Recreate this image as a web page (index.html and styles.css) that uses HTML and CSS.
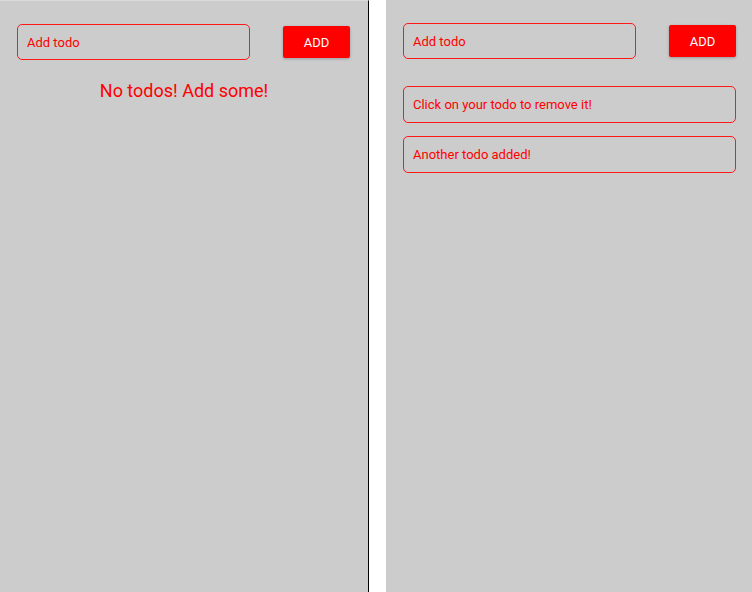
FILE: index.html
```html
<!DOCTYPE html>
<html>
<head>
<meta charset="utf-8">
<link rel="stylesheet" href="styles.css">
</head>
<body>
<div class="screens">
  <section class="panel panel-left">
    <form class="todo-form">
      <div class="todo-input">Add todo</div>
      <button class="add-btn" type="button">ADD</button>
    </form>
    <p class="empty">No todos! Add some!</p>
  </section>
  <div class="divider"></div>
  <section class="panel panel-right">
    <form class="todo-form">
      <div class="todo-input">Add todo</div>
      <button class="add-btn" type="button">ADD</button>
    </form>
    <ul class="todo-list">
      <li class="todo-item">Click on your todo to remove it!</li>
      <li class="todo-item">Another todo added!</li>
    </ul>
  </section>
</div>
</body>
</html>
```
FILE: styles.css
```css
html, body {
  margin: 0;
  padding: 0;
  background: #ffffff;
  height: 592px;
  overflow: hidden;
}
body {
  font-family: Roboto, "Liberation Sans", sans-serif;
  color: #ff0000;
}
.screens {
  display: flex;
  height: 592px;
}
.panel {
  background: #cccccc;
  box-sizing: border-box;
  padding: 23px 17px 0 17px;
}
.panel-left {
  width: 369px;
  border-top: 1px solid #dcdcdc;
  border-right: 1px solid #000000;
}
.panel-left .add-btn {
  margin-right: 1px;
}
.divider {
  width: 17px;
  background: #ffffff;
}
.panel-right {
  flex: 1;
  padding-right: 16px;
}
.todo-form {
  display: flex;
  justify-content: space-between;
  align-items: center;
  margin: 0;
}
.todo-input {
  width: 233px;
  height: 36px;
  box-sizing: border-box;
  border: 1px solid #ff1a1a;
  border-radius: 5px;
  padding: 1px 9px 0 9px;
  font-size: 13px;
  line-height: 34px;
  color: #ff0000;
}
.add-btn {
  width: 67px;
  height: 32px;
  border: none;
  border-radius: 2px;
  background: #ff0000;
  color: #ffffff;
  font-family: Roboto, "Liberation Sans", sans-serif;
  font-size: 13px;
  padding: 0;
  box-shadow: 0 1px 3px rgba(0, 0, 0, 0.25);
}
.empty {
  margin: 20px 0 0 0;
  text-align: center;
  font-size: 18px;
  line-height: 22px;
}
.todo-list {
  list-style: none;
  margin: 27px 0 0 0;
  padding: 0;
  display: flex;
  flex-direction: column;
  gap: 13px;
}
.todo-item {
  height: 37px;
  box-sizing: border-box;
  border: 1px solid #ff1a1a;
  border-radius: 5px;
  padding: 0 9px;
  font-size: 13px;
  line-height: 35px;
}
```
